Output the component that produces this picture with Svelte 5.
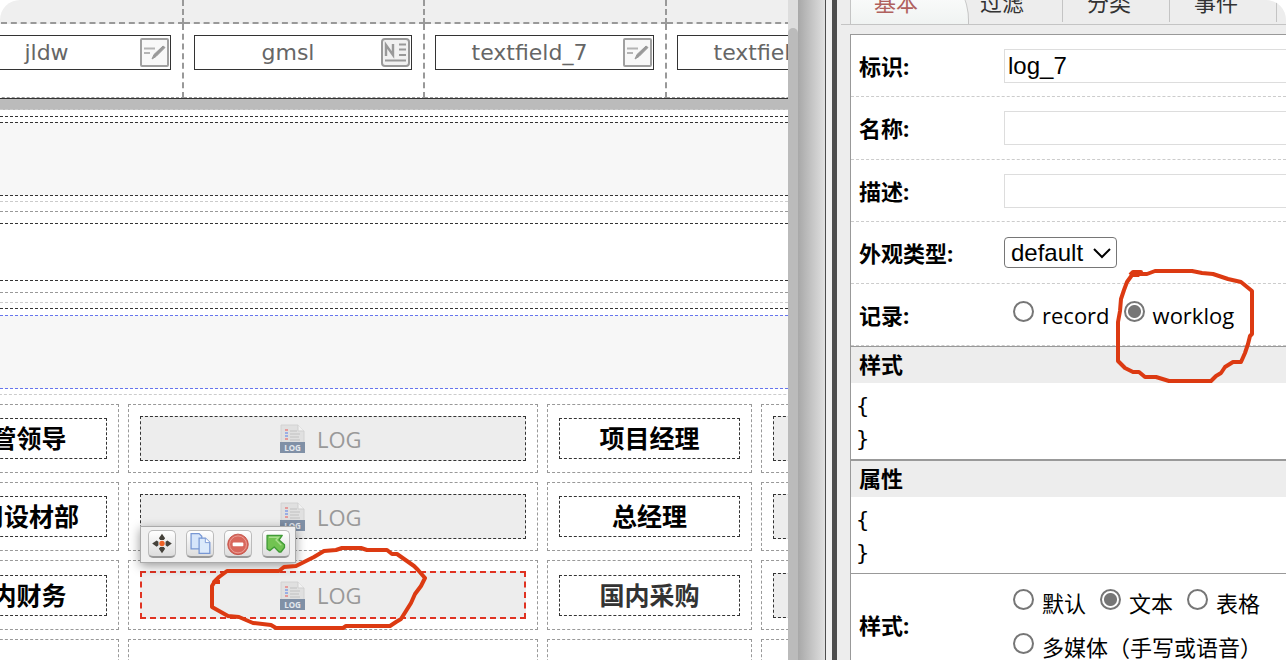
<script lang="ts">
  type Cell = { kind: "text" | "log"; text?: string; soft?: boolean; selected?: boolean };

  const fields = [
    { name: "jldw", type: "text" },
    { name: "gmsl", type: "number" },
    { name: "textfield_7", type: "text" },
    { name: "textfield_8", type: "text" }
  ];

  const rows: Cell[][] = [
    [{ kind: "text", text: "分管领导" }, { kind: "log" }, { kind: "text", text: "项目经理" }, { kind: "log" }],
    [{ kind: "text", text: "公司设材部" }, { kind: "log" }, { kind: "text", text: "总经理" }, { kind: "log" }],
    [
      { kind: "text", text: "国内财务" },
      { kind: "log", selected: true },
      { kind: "text", text: "国内采购", soft: true },
      { kind: "log" }
    ],
    [{ kind: "text" }, { kind: "text" }, { kind: "text" }, { kind: "text" }]
  ];

  const tabs = ["基本", "过滤", "分类", "事件"];
  const styles = ["默认", "文本", "表格", "多媒体（手写或语音）"];

  let activeTab = $state("基本");
  let ident = $state("log_7");
  let title = $state("");
  let description = $state("");
  let look = $state("default");
  let record = $state("worklog");
  let style = $state("文本");
</script>

<div class="designer">
  <main class="canvas">
    <div class="grid-head">
      {#each fields as field}
        <div class="head-cell"></div>
      {/each}
      {#each fields as field}
        <div class="field-cell">
          <div class="field">
            <span>{field.name}</span>
            <svg class="field-icon" viewBox="0 0 29 29" aria-hidden="true">
              {#if field.type === "number"}
                <rect x="1" y="1" width="27" height="27" rx="3" fill="#f1f1f1" stroke="#999" stroke-width="2" />
                <path d="M5 18V7l7 10V6" fill="none" stroke="#999" stroke-width="2.4" />
                <path d="M18 6.5h7M18 11.5h7M18 17h7M4 22.5h21" fill="none" stroke="#999" stroke-width="2" />
              {:else}
                <rect x="1" y="1" width="27" height="27" rx="1" fill="#f8f8f8" stroke="#a0a0a0" stroke-width="2" />
                <path d="M4 10.5h11M4 15h6" fill="none" stroke="#b4b4b4" stroke-width="2" />
                <path d="M12 21l2-4.500L23 8l2 1.500-9 9z" fill="#999" stroke="#999" />
              {/if}
            </svg>
          </div>
        </div>
      {/each}
    </div>
    <div class="splitter"></div>

    <div class="region">
      <div class="band"></div>
      <div class="slot"><div class="blank"></div></div>
    </div>

    <div class="region second">
      <div class="band blue"></div>
      <div class="approvals">
        {#each rows as row}
          {#each row as cell}
            <div class="cell">
              {#if cell.kind === "log"}
                <div class="log" class:selected={cell.selected}>
                  <svg width="25" height="29" viewBox="0 0 25 29" aria-hidden="true">
                    <path d="M1 1h17l6 6v12H1z" fill="#e0e0e0" stroke="#d2d2d2" />
                    <path d="M18 1v6h6" fill="#f2f2f2" stroke="#cfcfcf" />
                    <path d="M5 6h3M5 15h3" stroke="#e59a9a" stroke-width="2" />
                    <path d="M5 9h3M5 12h3" stroke="#9aaee5" stroke-width="2" />
                    <path d="M10 7h7M10 10h10M10 13h9M10 16h10" stroke="#cacaca" stroke-width="1.500" />
                    <path d="M0 18h25v11H0z" fill="#8090a6" />
                    <text x="12.500" y="27" text-anchor="middle">LOG</text>
                  </svg>
                  <span>LOG</span>
                  {#if cell.selected}
                    <div class="toolbar">
                      <button aria-label="移动">
                        <svg viewBox="0 0 28 28">
                          <path d="M14 3l3.500 5-1.500 2h-4l-1.500-2zM14 25l3.500-5-1.500-2h-4l-1.500 2zM3 14l5-3.500 2 1.500v4l-2 1.500zM25 14l-5-3.500-2 1.500v4l2 1.500z" fill="#45423b" />
                          <circle cx="14" cy="14" r="3" fill="#ee6227" />
                        </svg>
                      </button>
                      <button aria-label="复制">
                        <svg viewBox="0 0 28 28">
                          <path d="M4 3h9l3 3v14H4z" fill="#d6e5fa" stroke="#7797d4" stroke-width="1.400" />
                          <path d="M13 8h7l5 5v12H13z" fill="#dceafb" stroke="#7797d4" stroke-width="1.400" />
                          <path d="M20 8v5h5" fill="#fff" stroke="#7797d4" />
                        </svg>
                      </button>
                      <button aria-label="删除">
                        <svg viewBox="0 0 28 28">
                          <circle cx="14" cy="15" r="11.500" fill="#d9675c" stroke="#c14d42" />
                          <circle cx="14" cy="15" r="9.500" fill="none" stroke="#eba39b" />
                          <rect x="8" y="13" width="12" height="4" rx="1" fill="#fff" />
                        </svg>
                      </button>
                      <button aria-label="选择上级">
                        <svg viewBox="0 0 28 28">
                          <path d="M4 5h17l-3.500 5 6 5.500v3l-4 5h-2L12 18l-5 4-3-2z" fill="#72c352" stroke="#419b38" stroke-width="1.500" stroke-linejoin="round" />
                          <path d="M6 7h11l-3 3 6 6" fill="none" stroke="#a8df8e" stroke-width="1.500" />
                        </svg>
                      </button>
                    </div>
                    <svg class="mark log-mark" width="226" height="90" viewBox="208 544 226 90" aria-hidden="true">
                      <path d="M221 582h-6l5-5 8-6h52l5-4 12-1 18-9 10-6 12-1 6-2h19l6 2h20l5 4h5l17 12 4 4 7 8-4 8-6 8-4 9-5 8-5 8-5 3-6 4h-44l-3 2h-67l-5-3-18-2-14-6-11-1-16-9v-21l3-5" />
                    </svg>
                  {/if}
                </div>
              {:else if cell.text}
                <div class="caption" class:soft={cell.soft}>{cell.text}</div>
              {/if}
            </div>
          {/each}
        {/each}
      </div>
    </div>
  </main>

  <div class="scrollbar"><div class="thumb"></div></div>
  <div class="gutter"></div>
  <div class="divider"></div>

  <aside class="panel">
    <nav class="tabs">
      {#each tabs as tab}
        <button class:active={tab === activeTab} onclick={() => (activeTab = tab)}>{tab}</button>
      {/each}
    </nav>

    <form class="props">
      <div class="row">
        <label for="ident">标识:</label>
        <input id="ident" class="box" type="text" bind:value={ident} />
      </div>
      <div class="row tall">
        <label for="title">名称:</label>
        <input id="title" class="box" type="text" bind:value={title} />
      </div>
      <div class="row">
        <label for="description">描述:</label>
        <input id="description" class="box" type="text" bind:value={description} />
      </div>
      <div class="row">
        <label for="look">外观类型:</label>
        <div class="pick">
          <select id="look" bind:value={look}>
            <option>default</option>
          </select>
          <svg width="18" height="12" viewBox="0 0 18 12" aria-hidden="true">
            <path d="M1 2l8 8 8-8" fill="none" stroke="#000" stroke-width="2" />
          </svg>
        </div>
      </div>
      <div class="row">
        <span class="label">记录:</span>
        <div class="options">
          <label><input type="radio" name="record" value="record" bind:group={record} />record</label>
          <label class="marked">
            <input type="radio" name="record" value="worklog" bind:group={record} />worklog
            <svg class="mark record-mark" width="144" height="120" viewBox="1114 264 144 120" aria-hidden="true">
              <path d="M1130 274L1133 271H1141L1138 274H1132L1127 281L1124 289L1121 298L1120 310L1118 321V360L1125 367L1133 371H1139L1145 376H1156L1169 380H1211L1216 375L1221 372L1225 366L1233 361H1241L1245 352L1248 343L1250 335L1252 333V290L1241 281L1228 278L1213 273L1202 272L1192 270H1155L1147 273H1138" />
            </svg>
          </label>
        </div>
      </div>

      <h2>样式</h2>
      <pre>{"{\n}"}</pre>
      <h2 class="next">属性</h2>
      <pre>{"{\n}"}</pre>

      <div class="row styles">
        <span class="label">样式:</span>
        <div class="options">
          {#each styles as name}
            <label><input type="radio" name="style" value={name} bind:group={style} />{name}</label>
          {/each}
        </div>
      </div>
    </form>
  </aside>
</div>

<style>
  :global(body) {
    margin: 0;
    background: #fff;
  }

  .designer {
    display: grid;
    grid-template-columns: minmax(0, 1fr) 10px 27px 12px 449px;
    height: 100vh;
    overflow: hidden;
    border-radius: 20px 20px 0 0;
    background: #fff;
    font-family: "Open Sans", "Noto Sans CJK SC", sans-serif;
  }

  .designer * {
    box-sizing: border-box;
  }

  .canvas {
    overflow: hidden;
  }

  .grid-head {
    display: grid;
    grid-template-columns: 242px 241px 242px 242px;
    grid-template-rows: 24px 74px;
    width: 967px;
    margin-left: -58px;
    border-bottom: 1px solid #333;
  }

  .head-cell,
  .field-cell {
    border-right: 2px dashed #999;
  }

  .head-cell {
    border-bottom: 2px dashed #999;
    background: #efefef;
  }

  .field-cell {
    padding: 11px 11px 0 10px;
    border-bottom: 1px dashed #999;
  }

  .field {
    display: flex;
    align-items: center;
    height: 35px;
    padding-right: 1px;
    border: 1px solid #333;
    color: #666;
    font-family: "DejaVu Sans", sans-serif;
    font-size: 22px;
  }

  .field span {
    flex: 1;
    text-align: center;
  }

  .field-icon {
    width: 29px;
    height: 29px;
  }

  .splitter {
    height: 11px;
    border-bottom: 1px dashed #ccc;
    background: #bbb;
  }

  .region {
    margin-top: 6px;
    padding-top: 5px;
    border-top: 1px dashed #333;
  }

  .region.second {
    margin-top: 5px;
    padding-top: 6px;
  }

  .band {
    height: 74px;
    border: 1px dashed #333;
    border-width: 1px 0;
    background: #f7f7f7;
  }

  .band.blue {
    border-color: #6675ee;
  }

  .slot {
    margin-top: 5px;
    padding: 9px 0;
    border: 1px dashed #ccc;
    border-width: 1px 0;
  }

  .blank {
    height: 82px;
    padding: 11px 0;
    border: 1px dashed #999;
    border-width: 1px 0;
  }

  .blank::before {
    content: "";
    display: block;
    height: 56px;
    border: 1px dashed #333;
    border-width: 1px 0;
  }

  .approvals {
    display: grid;
    grid-template-columns: 205px 410px 205px 410px;
    grid-auto-rows: minmax(69px, auto);
    gap: 9px;
    width: 1257px;
    margin: 5px 0 0 -86px;
    padding-top: 9px;
    border-top: 1px dashed #ccc;
  }

  .cell {
    display: grid;
    align-items: center;
    padding: 0 11px;
    border: 1px dashed #999;
  }

  .caption {
    height: 41px;
    border: 1px dashed #333;
    color: #000;
    font-size: 25px;
    font-weight: 700;
    line-height: 39px;
    text-align: center;
  }

  .caption.soft {
    color: #333;
  }

  .log {
    position: relative;
    display: flex;
    align-items: center;
    height: 45px;
    padding-left: 139px;
    gap: 12px;
    border: 1px dashed #333;
    background: #ededed;
    color: #999;
    font-size: 22px;
  }

  .log text {
    fill: #e4e8ee;
    font: 700 8px "Open Sans", sans-serif;
  }

  .log.selected {
    height: 48px;
    margin: 10px 0;
    border: 2px dashed #e03322;
    padding-left: 138px;
  }

  .toolbar {
    position: absolute;
    bottom: calc(100% + 10px);
    left: -2px;
    display: flex;
    gap: 10px;
    width: 156px;
    height: 37px;
    padding: 3px 7px;
    border: 1px solid #aaa;
    background: #f0f0f0;
    box-shadow: 0 3px 10px rgba(0, 0, 0, 0.4);
  }

  .toolbar button {
    flex: none;
    width: 28px;
    height: 28px;
    padding: 0;
    border: 1px solid #bbb;
    border-bottom: 2px solid #999;
    border-radius: 5px;
    background: linear-gradient(#fff, #ddd);
  }

  .toolbar svg {
    display: block;
    width: 26px;
    height: 25px;
  }

  .mark {
    position: absolute;
    z-index: 2;
    overflow: visible;
    fill: none;
    stroke: #dc3a12;
    stroke-width: 4;
    stroke-linejoin: round;
    pointer-events: none;
  }

  .log-mark {
    top: -29px;
    left: 65px;
  }

  .scrollbar {
    padding-top: 28px;
    background: #ddd;
  }

  .thumb {
    height: 100%;
    border-radius: 5px 5px 0 0;
    background: #bbb;
  }

  .gutter {
    background: linear-gradient(90deg, #a8a8a8, #e0e0e0);
  }

  .divider {
    border-left: 1px solid #4d4d4d;
    border-right: 5px solid #4d4d4d;
    background: #f0f0f0;
  }

  .panel {
    overflow: hidden;
    padding-left: 4px;
    background: #ededed;
    color: #000;
  }

  .tabs {
    display: flex;
    align-items: flex-end;
    height: 25px;
    padding-left: 9px;
    border-bottom: 1px solid #c4c4c4;
  }

  .tabs button {
    flex: none;
    width: 107px;
    height: 40px;
    margin-bottom: 2px;
    padding: 0 0 0 17px;
    border: 0;
    border-right: 1px solid #c4c4c4;
    background: none;
    color: #333;
    font: inherit;
    font-size: 22px;
    line-height: 32px;
    text-align: left;
  }

  .tabs button + button {
    padding-left: 24px;
  }

  .tabs button.active {
    width: 119px;
    height: 42px;
    margin-bottom: 0;
    padding: 0 0 2px 23px;
    border-left: 1px solid #c4c4c4;
    border-radius: 0 24px 0 0 / 0 38px 0 0;
    background: linear-gradient(#fff, #f0f3f2);
    color: #b0615e;
  }

  .tabs button.active + button {
    width: 94px;
    padding-left: 11px;
  }

  .props {
    margin: 9px 0 0 9px;
    border-top: 1px solid #999;
    border-left: 1px solid #999;
    background: #fff;
    font-size: 22px;
  }

  .row {
    display: grid;
    grid-template-columns: 145px minmax(0, 1fr);
    align-items: center;
    height: 62px;
    padding-left: 8px;
    border-bottom: 1px dashed #ccc;
  }

  .row.tall {
    height: 63px;
  }

  .row > label,
  .label {
    padding-bottom: 2px;
    font-weight: 700;
  }

  .box {
    width: 110%;
    height: 34px;
    padding: 0 3px;
    border: 1px solid #ddd;
    background: #fff;
    font-family: "Liberation Sans", Arial, sans-serif;
    font-size: 24px;
  }

  .pick {
    position: relative;
    width: 113px;
    height: 31px;
  }

  .pick select {
    width: 100%;
    height: 100%;
    padding: 0 6px;
    appearance: none;
    border: 1px solid #767676;
    border-radius: 4px;
    background: #fff;
    color: #000;
    font-family: "Liberation Sans", Arial, sans-serif;
    font-size: 24px;
  }

  .pick svg {
    position: absolute;
    top: 10px;
    right: 6px;
    pointer-events: none;
  }

  .options {
    display: flex;
    flex-wrap: wrap;
    gap: 0 14px;
    padding-left: 9px;
    line-height: 44px;
  }

  .options label {
    display: flex;
    gap: 8px;
  }

  .options input {
    flex: none;
    width: 21px;
    height: 21px;
    margin: 8px 0 0;
    appearance: none;
    border: 2px solid #767676;
    border-radius: 50%;
    background: #fff;
  }

  .options input:checked {
    background: radial-gradient(circle, #767676 6px, #fff 7px);
  }

  .marked {
    position: relative;
  }

  .record-mark {
    top: -28px;
    left: -10px;
  }

  h2 {
    height: 37px;
    margin: 0;
    padding-left: 8px;
    border-top: 1px solid #999;
    background: #ededed;
    font-size: 22px;
    font-weight: 700;
    line-height: 35px;
  }

  h2.next {
    height: 38px;
    border-top-width: 2px;
  }

  pre {
    height: 76px;
    margin: 0;
    padding: 6px 5px;
    font-family: "DejaVu Sans Mono", monospace;
    font-size: 22px;
    line-height: 33px;
  }

  .row.styles {
    height: 104px;
    border-top: 1px solid #999;
    border-bottom: 1px solid #999;
  }
</style>
